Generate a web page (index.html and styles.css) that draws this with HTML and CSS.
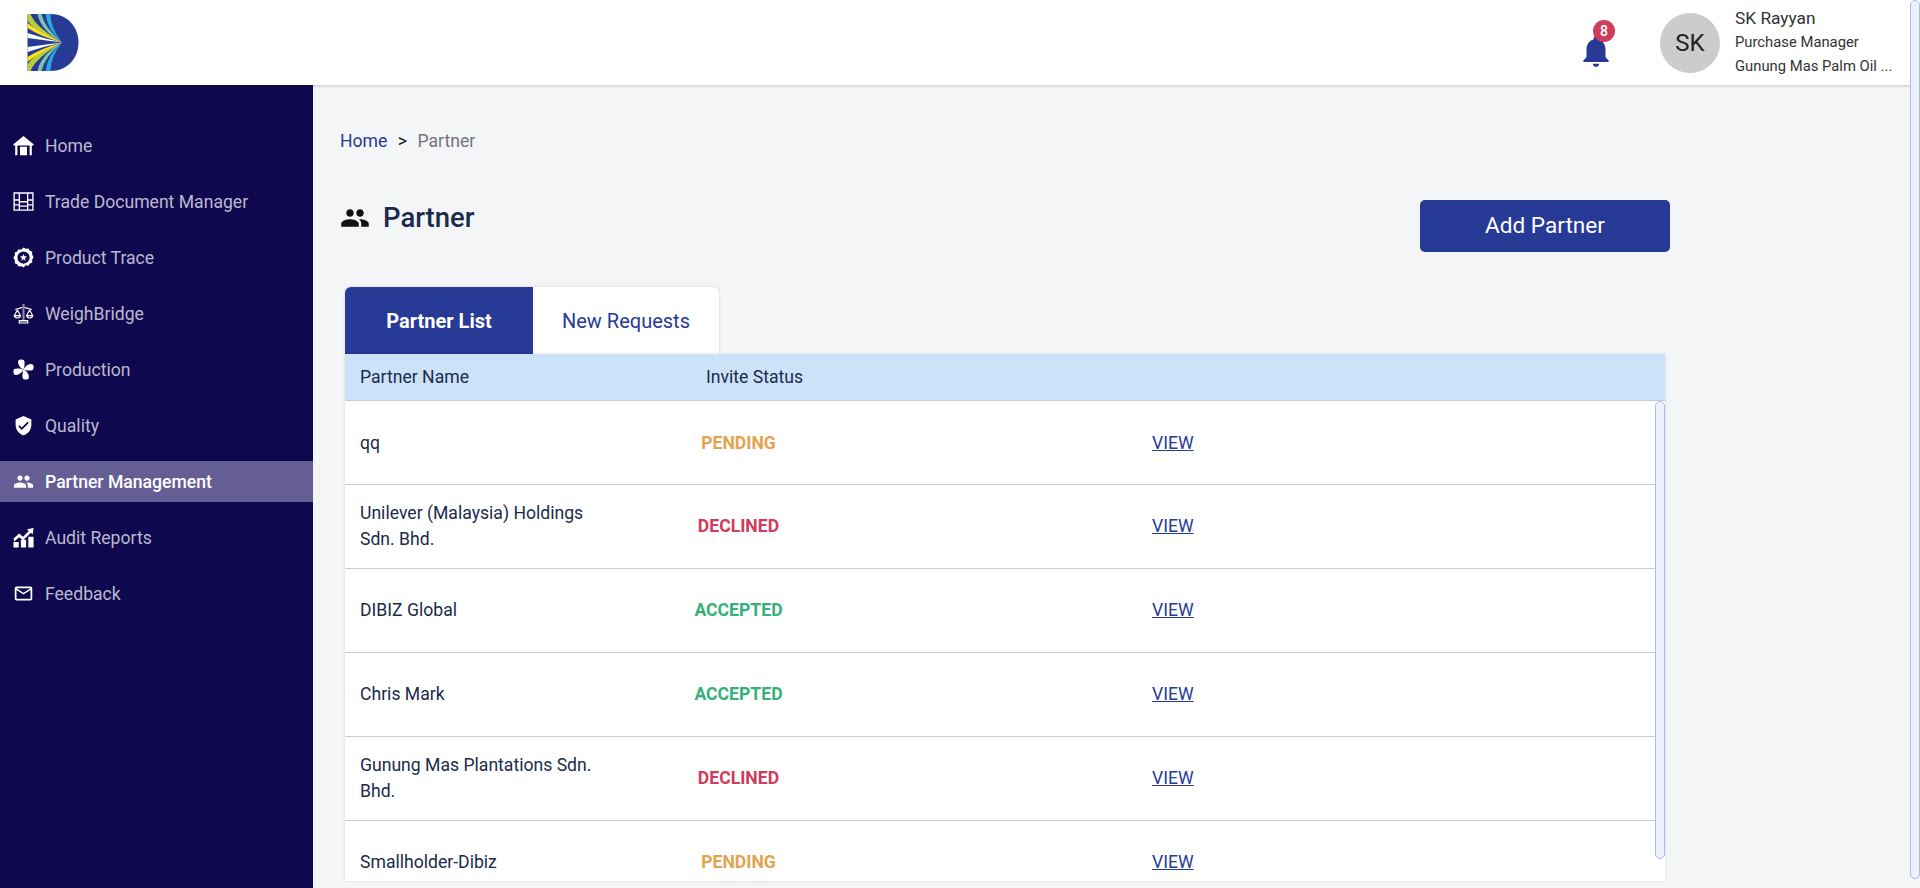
FILE: index.html
```html
<!DOCTYPE html>
<html lang="en">
<head>
  <meta charset="UTF-8" />
  <meta name="viewport" content="width=device-width, initial-scale=1.0"/>
  <title>Partner</title>
  <link rel="stylesheet" href="styles.css">
</head>
<body>

  <header class="topbar">
    <svg class="logo" viewBox="0 0 51 57">
      <defs>
        <g id="rays">
          <path fill="#b5cf3a" d="M0 0 H3 Q8 13 34.500 28.500 Q6 18 0 6 Z"/>
          <path fill="#7cc6ae" d="M10 0 H14 Q17 14 34.500 28.500 Q13 16 10 0 Z"/>
          <path fill="#25a9e0" d="M18 0 H23 Q23 14 34.500 28.500 Q20 16 18 0 Z"/>
          <path fill="#ffe01a" d="M0 9 Q14 20 34.500 28.500 Q12 22 0 14 Z"/>
          <path fill="#fff" d="M0 19 Q18 25 34.500 28.500 L0 24 Z"/>
        </g>
      </defs>
      <path fill="#263a96" d="M1.500 0 H23 C40 0 51 13 51 28.500 C51 44 40 57 23 57 H1.500 Q0 57 0 55.500 V1.500 Q0 0 1.500 0 Z"/>
      <use href="#rays"/>
      <use href="#rays" transform="matrix(1 0 0 -1 0 57)"/>
    </svg>
    <div class="topbar-right">
      <div class="bell">
        <svg viewBox="0 0 24 24"><path d="M12 22c1.100 0 2-.9 2-2h-4c0 1.100.89 2 2 2zm6-6v-5c0-3.070-1.640-5.640-4.500-6.320V4c0-.83-.67-1.500-1.500-1.500s-1.500.67-1.500 1.500v.68C7.630 5.360 6 7.920 6 11v5l-2 2v1h16v-1l-2-2z"/></svg>
        <span class="badge">8</span>
      </div>
      <div class="avatar">SK</div>
      <div class="user-info">
        <div class="user-name">SK Rayyan</div>
        <div class="user-line">Purchase Manager</div>
        <div class="user-line">Gunung Mas Palm Oil ...</div>
      </div>
    </div>
  </header>

  <div class="page">
    <aside class="sidebar">
      <a class="nav-item" href="#">
        <svg viewBox="0 0 24 24"><path d="M12 1 .5 10.500V12H2.500v11H5V12h14v11h2.500V12h2v-1.500zM8 13.500h8V23H8z"/></svg>
        Home
      </a>
      <a class="nav-item" href="#">
        <svg viewBox="0 0 24 24"><path fill-rule="evenodd" d="M.5 1.500h23v21H.5zM2 3v6.500h4.500V3zM8 3v8.500h8V3zM17.500 3v6.500H22V3zM2 11v4h4.500v-4zM17.500 11v4H22v-4zM8 13v3.500h8V13zM2 16.500V21h4.500v-4.500zM8 18v3h8v-3zM17.500 16.500V21H22v-4.500z"/></svg>
        Trade Document Manager
      </a>
      <a class="nav-item" href="#">
        <svg viewBox="0 0 24 24"><path fill-rule="evenodd" d="M12 .5l2.600 1.600 3-.5 1.600 2.600 2.800 1.200-.2 3L23.500 12l-1.700 2.600.2 3-2.800 1.200-1.600 2.600-3-.5L12 23.500l-2.600-1.600-3 .5-1.600-2.600L2 18.600l.2-3L.5 12l1.700-2.600-.2-3 2.800-1.200 1.600-2.600 3 .5zM12 5a7 7 0 1 0 0 14 7 7 0 0 0 0-14zM12 8l1.100 2.700 2.900.2-2.200 1.900.7 2.800-2.500-1.500-2.500 1.500.7-2.800L8 10.900l2.900-.2z"/></svg>
        Product Trace
      </a>
      <a class="nav-item" href="#">
        <svg viewBox="0 0 24 24">
          <g fill="none" stroke="#fff" stroke-width="1.300">
            <path d="M2.500 7.500 11 5M21.500 7.500 13 5M5 8 1.500 14.500h7zM19 8l-3.500 6.500h7zM1.500 14.500c.5 3.500 6.500 3.500 7 0M15.500 14.500c.5 3.500 6.500 3.500 7 0"/>
          </g>
          <path fill="#8f8cab" d="M10.800 1h2.400v19h-2.400z"/>
          <path fill="#fff" d="M6.500 19.500h11V23.500h-11zM8 21v1.200h8V21z"/>
        </svg>
        WeighBridge
      </a>
      <a class="nav-item" href="#">
        <svg viewBox="0 0 24 24">
          <path d="M12 12C8 10 5 6 6 2C7 0 11 0 12.500 1.500C14 4 13 9 12 12Z"/>
          <path d="M12 12C14 8 18 5 22 6C24 7 24 11 22.500 12.500C20 14 15 13 12 12Z"/>
          <path d="M12 12C16 14 19 18 18 22C17 24 13 24 11.500 22.500C10 20 11 15 12 12Z"/>
          <path d="M12 12C10 16 6 19 2 18C0 17 0 13 1.500 11.500C4 10 9 11 12 12Z"/>
        </svg>
        Production
      </a>
      <a class="nav-item" href="#">
        <svg viewBox="0 0 24 24"><path d="M12 1 3 5v6c0 5.550 3.840 10.740 9 12 5.160-1.260 9-6.450 9-12V5l-9-4zm-2 16-4-4 1.410-1.410L10 14.170l6.590-6.590L18 9l-8 8z"/></svg>
        Quality
      </a>
      <a class="nav-item active" href="#">
        <svg viewBox="0 0 24 24"><path d="M16 11c1.660 0 2.990-1.340 2.990-3S17.660 5 16 5c-1.660 0-3 1.340-3 3s1.340 3 3 3zm-8 0c1.660 0 2.990-1.340 2.990-3S9.660 5 8 5C6.340 5 5 6.340 5 8s1.340 3 3 3zm0 2c-2.330 0-7 1.170-7 3.500V19h14v-2.500c0-2.330-4.670-3.500-7-3.500zm8 0c-.29 0-.62.02-.97.05 1.160.84 1.970 1.970 1.970 3.450V19h6v-2.500c0-2.330-4.670-3.500-7-3.500z"/></svg>
        Partner Management
      </a>
      <a class="nav-item" href="#">
        <svg viewBox="0 0 24 24"><path d="M.5 17h6v6.500h-6zM9 14.500h6v9H9zM17.500 11h6v12.500h-6zM.5 13.500l6.500-6 4.500 3.500L18 4.500l-2-2 7.500-1.500-1 7.500-2-2-9 8.700-4.500-3.500-5.500 5z"/></svg>
        Audit Reports
      </a>
      <a class="nav-item" href="#">
        <svg viewBox="0 0 24 24"><path d="M20 4H4c-1.100 0-1.990.9-1.990 2L2 18c0 1.100.9 2 2 2h16c1.100 0 2-.9 2-2V6c0-1.100-.9-2-2-2zm0 14H4V8l8 5 8-5v10zm-8-7L4 6h16l-8 5z"/></svg>
        Feedback
      </a>
    </aside>

    <main class="content">
      <div class="breadcrumb">
        <a href="#">Home</a>
        <span class="sep">&gt;</span>
        <span class="current">Partner</span>
      </div>

      <div class="title-row">
        <h1>
          <svg viewBox="0 0 24 24"><path d="M16 11c1.660 0 2.990-1.340 2.990-3S17.660 5 16 5c-1.660 0-3 1.340-3 3s1.340 3 3 3zm-8 0c1.660 0 2.990-1.340 2.990-3S9.660 5 8 5C6.340 5 5 6.340 5 8s1.340 3 3 3zm0 2c-2.330 0-7 1.170-7 3.500V19h14v-2.500c0-2.330-4.670-3.500-7-3.500zm8 0c-.29 0-.62.02-.97.05 1.160.84 1.970 1.970 1.970 3.450V19h6v-2.500c0-2.330-4.670-3.500-7-3.500z"/></svg>
          Partner
        </h1>
        <button class="add-btn">Add Partner</button>
      </div>

      <div class="tabs">
        <div class="tab active">Partner List</div>
        <div class="tab">New Requests</div>
      </div>

      <div class="table">
        <div class="row head">
          <div>Partner Name</div>
          <div class="status-head">Invite Status</div>
        </div>
        <div class="row">
          <div class="name">qq</div>
          <div class="status pending">PENDING</div>
          <a class="view" href="#">VIEW</a>
        </div>
        <div class="row">
          <div class="name">Unilever (Malaysia) Holdings Sdn. Bhd.</div>
          <div class="status declined">DECLINED</div>
          <a class="view" href="#">VIEW</a>
        </div>
        <div class="row">
          <div class="name">DIBIZ Global</div>
          <div class="status accepted">ACCEPTED</div>
          <a class="view" href="#">VIEW</a>
        </div>
        <div class="row">
          <div class="name">Chris Mark</div>
          <div class="status accepted">ACCEPTED</div>
          <a class="view" href="#">VIEW</a>
        </div>
        <div class="row">
          <div class="name">Gunung Mas Plantations Sdn. Bhd.</div>
          <div class="status declined">DECLINED</div>
          <a class="view" href="#">VIEW</a>
        </div>
        <div class="row">
          <div class="name">Smallholder-Dibiz</div>
          <div class="status pending">PENDING</div>
          <a class="view" href="#">VIEW</a>
        </div>
        <div class="thumb table-thumb"></div>
      </div>
    </main>
  </div>

  <div class="thumb page-thumb"></div>

</body>
</html>
```

FILE: styles.css
```css
* {
  box-sizing: border-box;
}

html, body {
  height: 100%;
}

body {
  margin: 0;
  font-family: Roboto, "Liberation Sans", sans-serif;
  background-color: #f4f5f7;
  color: #1a2b4b;
  overflow: hidden;
}

.topbar {
  height: 85px;
  background-color: white;
  display: flex;
  justify-content: space-between;
  align-items: center;
  padding: 0 28px 0 27px;
  box-shadow: 0 1px 3px rgba(0, 0, 0, 0.2);
  position: relative;
  z-index: 2;
}

.logo {
  width: 52px;
  height: 57px;
}

.topbar-right {
  display: flex;
  align-items: center;
}

.bell {
  width: 38px;
  height: 38px;
  position: relative;
  margin-right: 45px;
  margin-top: 17px;
}

.bell svg {
  width: 38px;
  height: 38px;
  fill: #263a96;
  display: block;
}

.badge {
  position: absolute;
  top: -12px;
  left: 16px;
  width: 22px;
  height: 22px;
  border-radius: 50%;
  background-color: #cf3c5c;
  color: white;
  font-size: 14px;
  font-weight: 500;
  display: flex;
  align-items: center;
  justify-content: center;
}

.avatar {
  width: 60px;
  height: 60px;
  border-radius: 50%;
  background-color: #ccc;
  color: #222;
  font-size: 24px;
  display: flex;
  align-items: center;
  justify-content: center;
  margin-right: 15px;
}

.user-info {
  width: 157px;
  color: #333;
  white-space: nowrap;
}

.user-name {
  font-size: 17.300px;
  line-height: 25px;
  margin-top: -1px;
}

.user-line {
  font-size: 14.800px;
  line-height: 23.500px;
}

.page {
  display: flex;
  height: calc(100vh - 85px);
}

.sidebar {
  width: 313px;
  flex-shrink: 0;
  background-color: #10084f;
  padding-top: 40px;
  display: flex;
  flex-direction: column;
  gap: 15px;
}

.nav-item {
  height: 41px;
  display: flex;
  align-items: center;
  gap: 11px;
  padding-left: 13px;
  color: #bbb9cd;
  font-size: 17.600px;
  text-decoration: none;
}

.nav-item svg {
  width: 21px;
  height: 21px;
  fill: white;
  flex-shrink: 0;
}

.nav-item.active {
  background-color: #655e94;
  color: white;
  font-weight: 500;
}

.content {
  flex: 1;
  padding: 45px 0 0 27px;
  min-width: 0;
}

.breadcrumb {
  font-size: 17.600px;
  line-height: 22px;
  display: flex;
  gap: 10.500px;
}

.breadcrumb a {
  color: #263a96;
  text-decoration: none;
}

.breadcrumb .sep {
  color: #111;
}

.breadcrumb .current {
  color: #6f7480;
}

.title-row {
  width: 1330px;
  display: flex;
  justify-content: space-between;
  margin-top: 48px;
}

h1 {
  margin: 0;
  font-size: 27.500px;
  font-weight: 500;
  line-height: 36px;
  display: flex;
  align-items: center;
  gap: 13px;
  align-self: flex-start;
}

h1 svg {
  width: 30px;
  height: 30px;
  fill: #111;
}

.add-btn {
  width: 250px;
  height: 52px;
  padding-bottom: 3px;
  background-color: #263a96;
  color: white;
  border: none;
  border-radius: 5px;
  font-family: inherit;
  font-size: 22.600px;
  cursor: pointer;
}

.tabs {
  display: flex;
  margin: 35px 0 0 5px;
  width: fit-content;
  background-color: white;
  border-radius: 6px 6px 0 0;
  box-shadow: 0 0 3px rgba(0, 0, 0, 0.15);
}

.tab {
  height: 67px;
  display: flex;
  align-items: center;
  justify-content: center;
  width: 186px;
  font-size: 20px;
  color: #263a96;
}

.tab.active {
  width: 188px;
  background-color: #263a96;
  color: white;
  font-weight: 700;
  border-radius: 6px 0 0 0;
}

.table {
  width: 1320px;
  margin-left: 5px;
  height: 527px;
  overflow: hidden;
  background-color: white;
  box-shadow: 0 0 3px rgba(0, 0, 0, 0.12);
  position: relative;
}

.row {
  display: grid;
  grid-template-columns: 295px 198px 1fr;
  align-items: center;
  height: 84px;
  padding: 0 10px 1px 0;
  border-top: 1px solid #cbcbcb;
  font-size: 17.600px;
}

.row.head {
  height: 47px;
  background-color: #cce2f9;
  border-top: none;
  border-bottom: 1px solid #cbcbcb;
  padding: 0;
}

.row.head + .row {
  height: 83px;
  border-top: none;
  padding-bottom: 0;
}

.row > div:first-child {
  padding-left: 15px;
}

.status-head {
  padding-left: 66px;
  white-space: nowrap;
}

.name {
  padding-right: 30px;
  line-height: 26px;
}

.status {
  font-weight: 700;
  text-align: center;
  margin-left: -1px;
}

.pending {
  color: #e3a34f;
}

.declined {
  color: #cf3c5c;
}

.accepted {
  color: #34b078;
}

.view {
  color: #263a96;
  margin-left: 314px;
}

.thumb {
  position: absolute;
  width: 10px;
  background-color: #eef2fe;
  border: 1px solid #aab8fb;
  border-radius: 5px;
}

.table-thumb {
  right: 0;
  top: 47px;
  height: 458px;
}

.page-thumb {
  right: 0;
  top: 0;
  height: 879px;
  z-index: 3;
}
```
